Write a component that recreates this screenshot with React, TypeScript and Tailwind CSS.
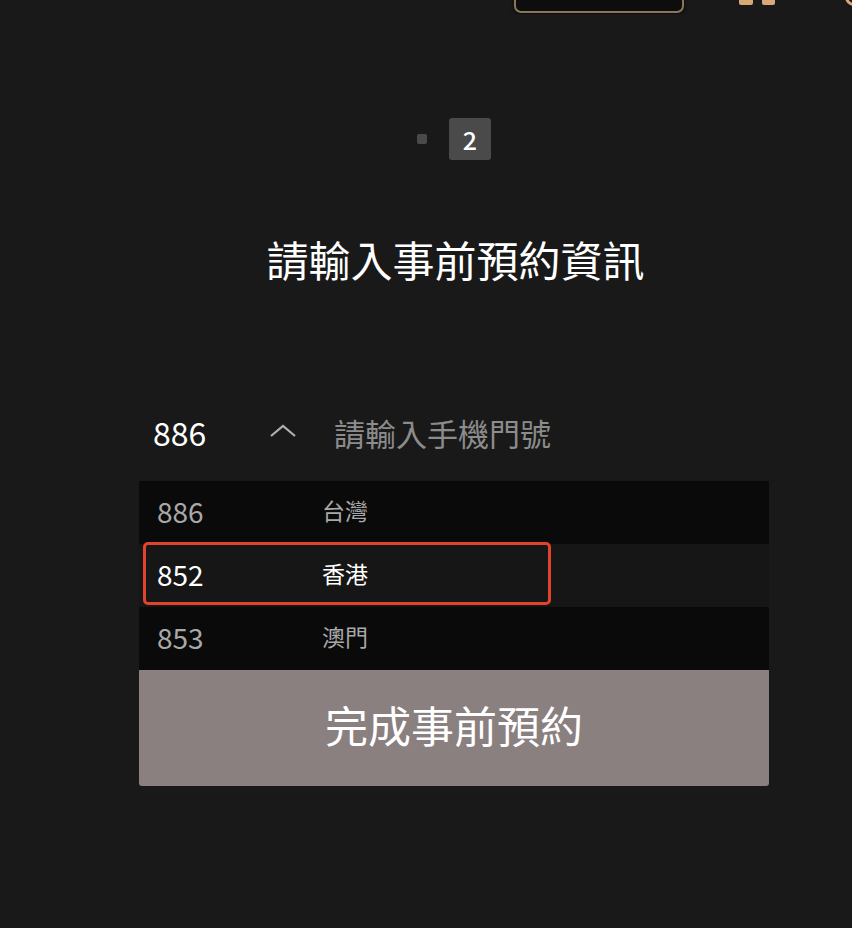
import React from 'react';

const countries = [
  { code: '886', name: '台灣', active: false },
  { code: '852', name: '香港', active: true },
  { code: '853', name: '澳門', active: false },
];

function TopBar() {
  return (
    <div className="flex h-[14px] items-start overflow-hidden">
      <div className="ml-[514px] -mt-[27px] h-[40px] w-[170px] shrink-0 rounded-[7px] border-2 border-[#8b7658] bg-[#0d0d0d] shadow-[0_2px_4px_rgba(0,0,0,0.6)]" />
      <div className="ml-[55px] -mt-[15px] h-[20px] w-[14px] shrink-0 rounded-b-[2px] bg-[#d9a877]" />
      <div className="ml-[9px] -mt-[15px] h-[20px] w-[13px] shrink-0 rounded-b-[2px] bg-[#d9a877]" />
      <div className="ml-[70px] -mt-[12px] h-[18px] w-[18px] shrink-0 rounded-full border-[3px] border-[#d9a877]" />
    </div>
  );
}

export default function App() {
  return (
    <div
      className="min-h-[928px] overflow-hidden bg-[#191919] text-white"
      style={{ fontFamily: '"Noto Sans CJK TC", "Noto Sans", sans-serif' }}
    >
      <TopBar />
      <div className="w-[630px] ml-[139px] flex flex-col">
        {/* pager */}
        <div className="mt-[104px] flex items-center justify-center gap-[22px]">
          <div className="h-[10px] w-[10px] rounded-[2px] bg-[#4a4a4a]" />
          <div className="flex h-[42px] w-[42px] items-center justify-center rounded-[3px] bg-[#4a4a4a] text-[25px] font-medium leading-none">
            2
          </div>
        </div>

        <h1 className="mt-[74px] text-center text-[42px] font-normal leading-[50px] pl-[3px]">請輸入事前預約資訊</h1>

        {/* phone input */}
        <div className="mt-[123px] flex h-[50px] items-center pl-[14px]">
          <span className="w-[116px] text-[32px] leading-none">886</span>
          <svg width="28" height="14" viewBox="0 0 28 14" className="-mt-[2px]">
            <path d="M2 12 L14 2 L26 12" fill="none" stroke="#b0b0b0" strokeWidth="2.2" />
          </svg>
          <span className="ml-[37px] text-[31px] leading-none text-[#8c8c8c]">請輸入手機門號</span>
        </div>

        {/* dropdown */}
        <div className="mt-[24px] flex flex-col">
          {countries.map((c) => (
            <div
              key={c.code}
              className={`relative flex h-[63px] items-center pb-[4px] ${c.active ? 'bg-[#161616] text-white' : 'bg-[#0a0a0a] text-[#a8a8a8]'}`}
            >
              {c.active && (
                <div className="absolute left-[4px] top-[-2px] h-[63px] w-[408px] rounded-[5px] border-[3px] border-[#e2432c]" />
              )}
              <span className="ml-[18px] w-[165px] text-[28px] leading-none">{c.code}</span>
              <span className="text-[23px] leading-none">{c.name}</span>
            </div>
          ))}
        </div>

        <button className="flex h-[116px] items-center justify-center rounded-b-[3px] bg-[#8a807f] pb-[7px] text-[43px] leading-none text-white">
          完成事前預約
        </button>
      </div>
    </div>
  );
}
